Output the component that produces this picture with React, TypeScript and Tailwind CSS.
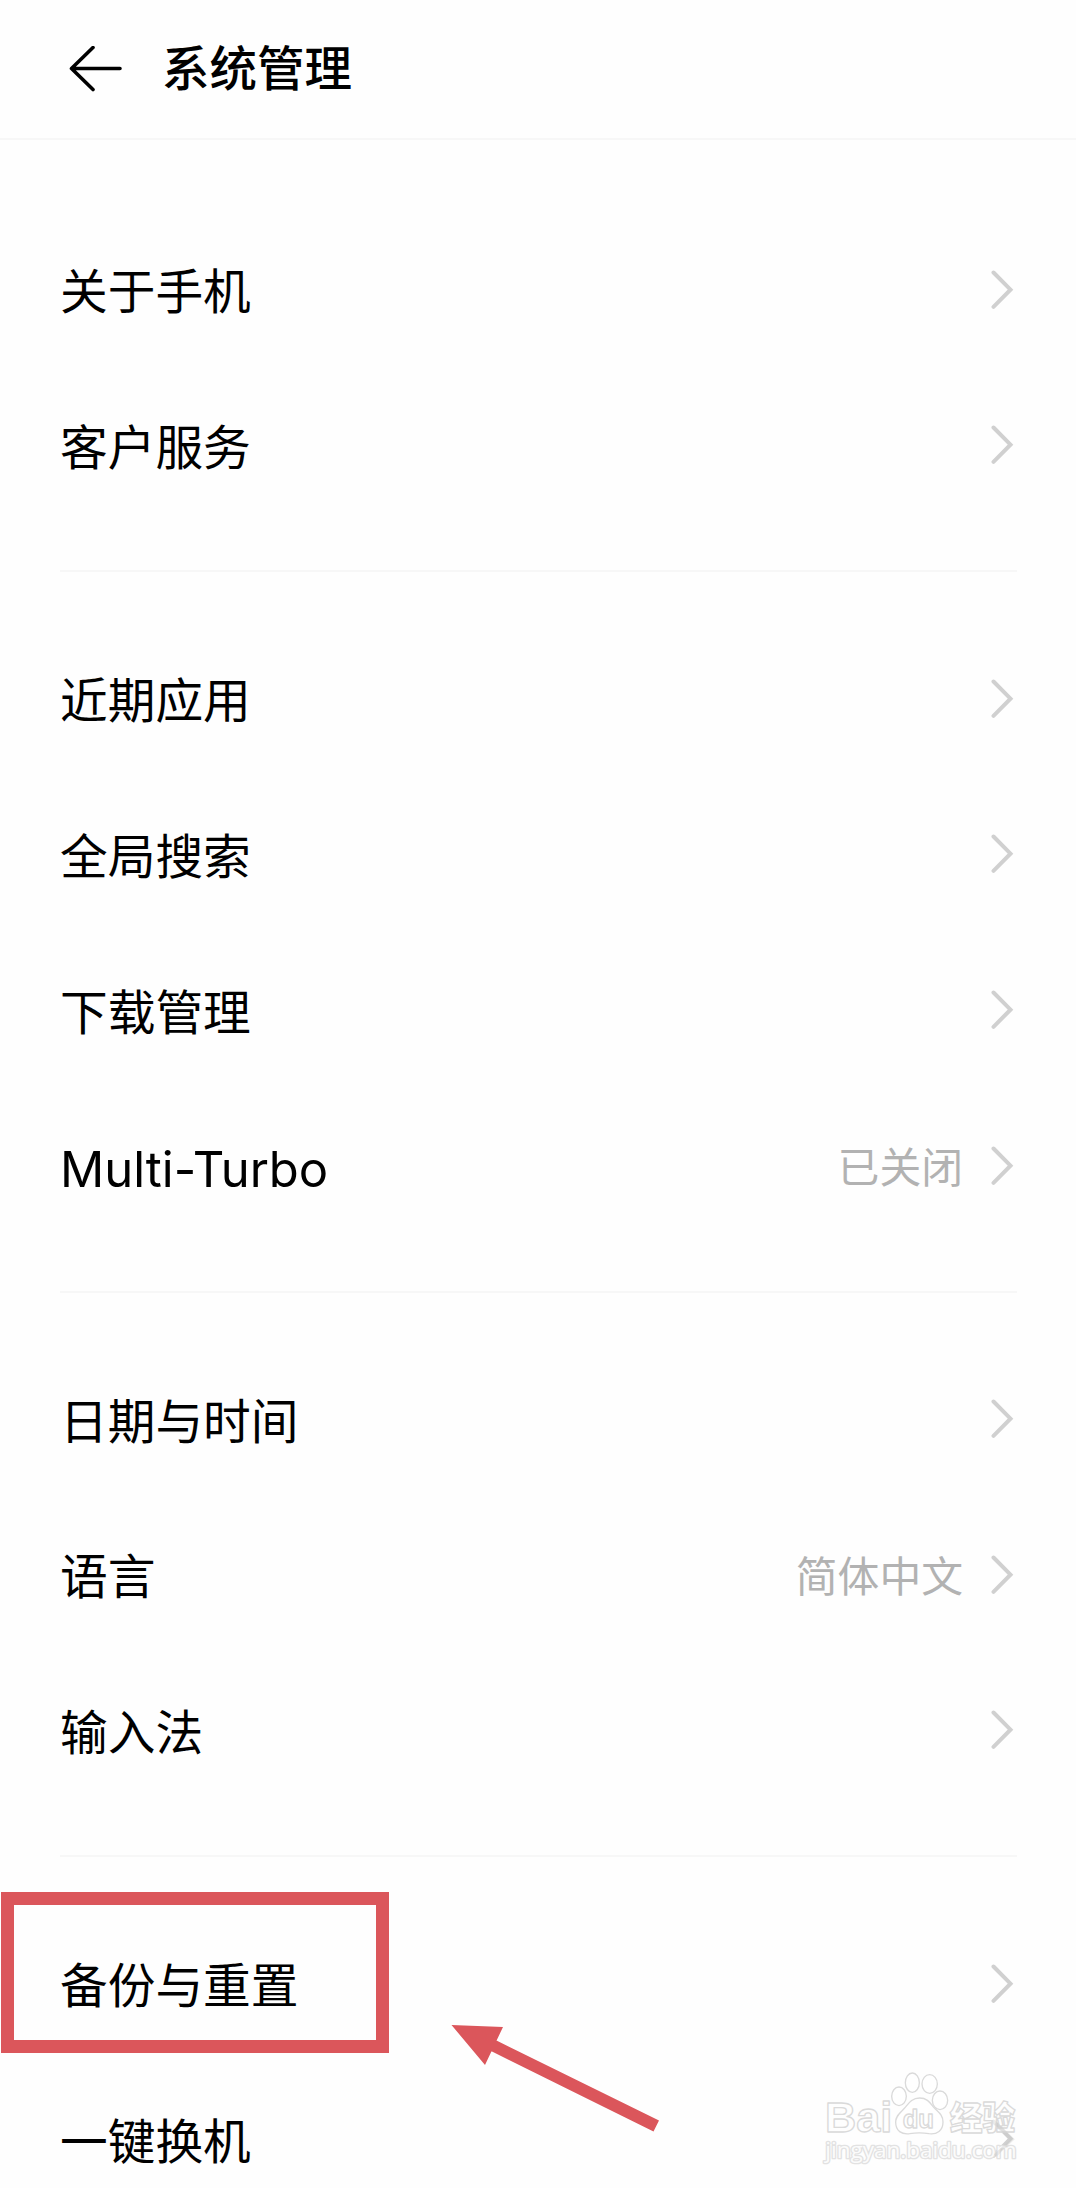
type TItem = {
  label: string;
  value?: string;
};

const groups: TItem[][] = [
  [{ label: "关于手机" }, { label: "客户服务" }],
  [
    { label: "近期应用" },
    { label: "全局搜索" },
    { label: "下载管理" },
    { label: "Multi-Turbo", value: "已关闭" },
  ],
  [
    { label: "日期与时间" },
    { label: "语言", value: "简体中文" },
    { label: "输入法" },
  ],
  [{ label: "备份与重置" }, { label: "一键换机" }],
];

const BackArrow = () => (
  <svg width={54} height={46} viewBox="0 0 54 46" fill="none">
    <path
      d="M25 1.500 3.500 22.500l21.500 21M3.500 22.500h48.500"
      stroke="#000"
      strokeWidth={3.6}
      strokeLinecap="round"
      strokeLinejoin="round"
    />
  </svg>
);

const Chevron = () => (
  <svg width={24} height={40} viewBox="0 0 24 40" fill="none">
    <path
      d="M3.500 2.500 20.500 19.700 3.500 36.800"
      stroke="#d0d0d0"
      strokeWidth={4}
      strokeLinecap="round"
    />
  </svg>
);

const Row = ({ label, value }: TItem) => (
  <div className="flex h-[155.7px] items-center justify-between">
    <span
      className={
        /^[A-Z]/.test(label)
          ? "pt-[7px] text-[49px] leading-none"
          : "pt-[7px] text-[47.7px] leading-none"
      }
    >
      {label}
    </span>
    <div className="flex items-center gap-[27px]">
      {value && (
        <span className="pt-[6px] text-[41.8px] leading-none text-[#b2b2b2]">
          {value}
        </span>
      )}
      <Chevron />
    </div>
  </div>
);

const Watermark = () => (
  <svg
    className="absolute top-[2040px] left-[796px]"
    width={280}
    height={148}
    viewBox="0 0 840 444"
    fill="#fff"
    fillOpacity={0.6}
    stroke="#dadada"
    strokeWidth={4}
    strokeLinejoin="round"
  >
    <ellipse cx={309} cy={169} rx={22} ry={28} />
    <ellipse cx={349} cy={128} rx={21} ry={29} />
    <ellipse cx={401} cy={132} rx={23} ry={28} />
    <ellipse cx={432} cy={181} rx={23} ry={28} />
    <path d="M371 174c24 0 32 16 43 29 12 13 27 21 27 43 0 26-18 38-42 35-19-3-39-3-58 0-24 3-42-8-42-34 0-22 16-30 28-44 11-13 20-29 44-29z" />
    <g className="font-['Liberation_Sans','Noto_Sans_CJK_SC',sans-serif]">
      <text x={87} y={276} fontSize={130} fontWeight={700} textLength={202} lengthAdjust="spacingAndGlyphs">
        Bai
      </text>
      <text x={320} y={265} fontSize={76} fontWeight={700} textLength={94} lengthAdjust="spacingAndGlyphs">
        du
      </text>
      <text x={461} y={269} fontSize={99} fontWeight={900} textLength={197} lengthAdjust="spacingAndGlyphs">
        经验
      </text>
      <text
        className="font-['Open_Sans',sans-serif]"
        x={88}
        y={355}
        fontSize={65}
        textLength={574}
        strokeWidth={8}
        stroke="#e2e2e2"
        fillOpacity={0.9}
        paintOrder="stroke"
        lengthAdjust="spacingAndGlyphs"
      >
        jingyan.baidu.com
      </text>
    </g>
    {/* The last row's chevron shows through the logo */}
    <path
      d="M599 249 649 298 597 347"
      fill="none"
      stroke="#c8c8c8"
      strokeOpacity={0.35}
      strokeWidth={10}
      strokeLinejoin="miter"
    />
  </svg>
);

const App = () => {
  return (
    <div className="relative h-[2188px] w-[1076px] overflow-hidden bg-[#fefefe] font-[Inter,'Noto_Sans_CJK_SC',sans-serif] text-black">
      <header className="flex h-[140px] items-center gap-[40px] border-b-2 border-[#f7f7f7] pl-[68px]">
        <BackArrow />
        <h1 className="text-[47.5px] leading-none font-medium">系统管理</h1>
      </header>

      <main className="pt-[23px] pr-[59px] pl-[60px]">
        {groups.map((group, index) => (
          <section
            key={index}
            className="border-b-2 border-[#f7f7f7] pt-[48.7px] pb-[47px] last:border-b-0"
          >
            <div className="pr-[3px]">
              {group.map((item) => (
                <Row key={item.label} {...item} />
              ))}
            </div>
          </section>
        ))}
      </main>

      {/* Highlight on the backup entry */}
      <div className="absolute top-[1892px] left-[1px] h-[161px] w-[388px] border-[13px] border-[#db565b]" />
      <svg
        className="absolute top-[2020px] left-[448px]"
        width={216}
        height={116}
        fill="#db565b"
      >
        <path d="M3.500 5 55 7 37 45zM48.500 20.500 211 100.500 205.500 111.500 43 31z" />
      </svg>

      <Watermark />
    </div>
  );
};

export default App;
